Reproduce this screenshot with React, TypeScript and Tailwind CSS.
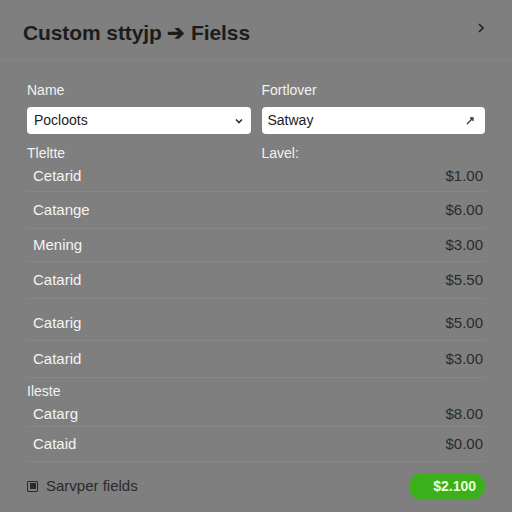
import React from 'react';

type Row = { name: string; price: string; h: string };

const groupOne: Row[] = [
  { name: 'Cetarid', price: '$1.00', h: 'h-[30px]' },
  { name: 'Catange', price: '$6.00', h: 'h-[37px]' },
  { name: 'Mening', price: '$3.00', h: 'h-[33px]' },
  { name: 'Catarid', price: '$5.50', h: 'h-[37px]' },
  { name: 'Catarig', price: '$5.00', h: 'h-[42px] pt-[8px]' },
  { name: 'Catarid', price: '$3.00', h: 'h-[37px]' },
];

const groupTwo: Row[] = [
  { name: 'Catarg', price: '$8.00', h: 'h-[25px]' },
  { name: 'Cataid', price: '$0.00', h: 'h-[35px]' },
];

function PriceRow({ row }: { row: Row }) {
  return (
    <div className={`flex items-center justify-between border-b border-[#878787] pl-[6px] pr-[2px] ${row.h}`}>
      <span className="text-[15px] text-[#f4f4f4]">{row.name}</span>
      <span className="text-[15px] text-[#2b2b2b]">{row.price}</span>
    </div>
  );
}

export default function App() {
  return (
    <div
      className="w-[512px] h-[512px] overflow-hidden bg-[#7f7f7f]"
      style={{ fontFamily: '"Liberation Sans", Arial, sans-serif' }}
    >
      <div className="flex items-center justify-between h-[61px] pl-[23px] pr-[26px] pt-[5px] border-b border-[#858585]">
        <h1 className="text-[21px] font-bold text-[#1c1c1c] tracking-[-0.1px]">Custom sttyjp ➔ Fielss</h1>
        <svg width="10" height="12" viewBox="0 0 10 12" className="mt-[-10px]">
          <path d="M3 2 L7 6 L3 10" fill="none" stroke="#222" strokeWidth="1.6" />
        </svg>
      </div>

      <div className="px-[27px]">
        <div className="grid grid-cols-2 gap-x-[11px] pt-[20px]">
          <div className="flex flex-col">
            <label className="text-[14px] text-[#f2f2f2] h-[18px] leading-[18px]">Name</label>
            <div className="mt-[8px] h-[27px] bg-white rounded-[4px] flex items-center justify-between pl-[7px] pr-[8px]">
              <span className="text-[14px] text-[#222]">Pocloots</span>
              <svg width="8" height="6" viewBox="0 0 8 6">
                <path d="M1 1.5 L4 4.5 L7 1.5" fill="none" stroke="#333" strokeWidth="1.6" />
              </svg>
            </div>
            <span className="text-[14px] text-[#f2f2f2] mt-[10px] h-[18px] leading-[18px]">Tleltte</span>
          </div>
          <div className="flex flex-col">
            <label className="text-[14px] text-[#f2f2f2] h-[18px] leading-[18px]">Fortlover</label>
            <div className="mt-[8px] h-[27px] bg-white rounded-[4px] flex items-center justify-between pl-[6px] pr-[10px]">
              <span className="text-[14px] text-[#222]">Satway</span>
              <svg width="10" height="10" viewBox="0 0 10 10">
                <path d="M2 8 L7 3 M5 2 L8 2 L8 5" fill="none" stroke="#333" strokeWidth="1.3" />
              </svg>
            </div>
            <span className="text-[14px] text-[#f2f2f2] mt-[10px] h-[18px] leading-[18px]">Lavel:</span>
          </div>
        </div>

        <div className="flex flex-col">
          {groupOne.map((r, i) => (
            <PriceRow key={i} row={r} />
          ))}
        </div>

        <div className="h-[24px] flex items-end text-[14px] text-[#f2f2f2]">Ileste</div>

        <div className="flex flex-col">
          {groupTwo.map((r, i) => (
            <PriceRow key={i} row={r} />
          ))}
        </div>

        <div className="flex items-center justify-between h-[48px]">
          <div className="flex items-center gap-[8px]">
            <span className="w-[11px] h-[11px] border border-[#2a2a2a] rounded-[1px] flex items-center justify-center">
              <span className="w-[6px] h-[6px] bg-[#2a2a2a]" />
            </span>
            <span className="text-[15px] text-[#2a2a2a]">Sarvper fields</span>
          </div>
          <span className="h-[27px] w-[76px] rounded-full bg-[#3cb01b] flex items-center justify-end pr-[9px] text-[14px] font-bold text-[#eaffd8]">
            $2.100
          </span>
        </div>
      </div>
    </div>
  );
}
